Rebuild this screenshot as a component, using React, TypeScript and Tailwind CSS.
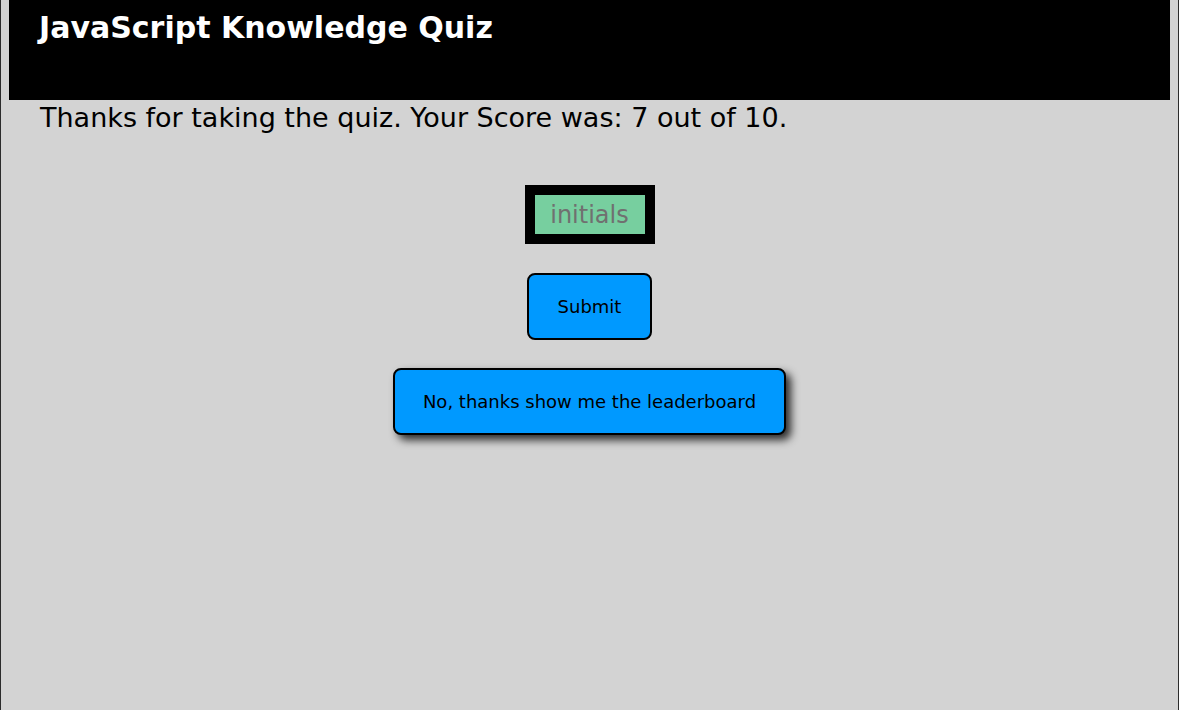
import React from "react";

const font = { fontFamily: '"DejaVu Sans", "Open Sans", sans-serif' };

export default function App() {
  return (
    <div
      className="min-h-[710px] bg-[#d3d3d3] border-x border-[#2b2b2b] text-black"
      style={font}
    >
      {/* header bar */}
      <header className="mx-2 h-[100px] bg-black px-[30px] pt-[4px]">
        <h1 className="text-[30px] font-bold leading-[48px] text-white">JavaScript Knowledge Quiz</h1>
      </header>

      <p className="px-[39px] text-[27px] leading-[36px]">
        Thanks for taking the quiz. Your Score was: 7 out of 10.
      </p>

      <div className="flex flex-col items-center mt-[49px]">
        <input
          placeholder="initials"
          className="w-[130px] h-[59px] border-[10px] border-black bg-[#77cf9f] text-center text-[24px] placeholder:text-[#707070] outline-none"
        />
        <button className="mt-[29px] w-[125px] h-[67px] rounded-lg border-2 border-black bg-[#0099ff] text-[18px]">
          Submit
        </button>
        <button className="mt-[28px] w-[393px] h-[67px] rounded-lg border-2 border-black bg-[#0099ff] text-[18px] shadow-[5px_5px_9px_rgba(0,0,0,0.8)]">
          No, thanks show me the leaderboard
        </button>
      </div>
    </div>
  );
}
